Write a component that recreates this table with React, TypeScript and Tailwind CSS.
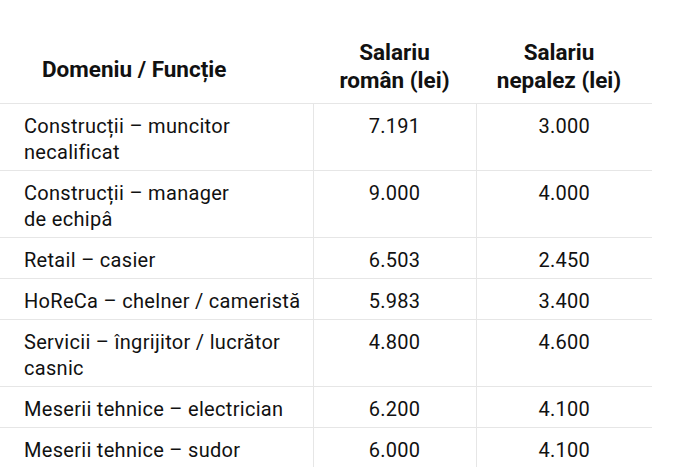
const rows = [
  { job: ["Construcții – muncitor", "necalificat"], ro: "7.191", np: "3.000" },
  { job: ["Construcții – manager", "de echipâ"], ro: "9.000", np: "4.000" },
  { job: ["Retail – casier"], ro: "6.503", np: "2.450" },
  { job: ["HoReCa – chelner / cameristă"], ro: "5.983", np: "3.400" },
  { job: ["Servicii – îngrijitor / lucrător", "casnic"], ro: "4.800", np: "4.600" },
  { job: ["Meserii tehnice – electrician"], ro: "6.200", np: "4.100" },
  { job: ["Meserii tehnice – sudor"], ro: "6.000", np: "4.100" },
];

export default function App() {
  return (
    <div className="min-h-screen bg-white text-[#111] font-['Roboto',sans-serif]">
      <table className="w-[652px] border-collapse table-fixed text-[20px] leading-[26px] tracking-[0.3px]">
        <colgroup>
          <col className="w-[313px]" />
          <col className="w-[163px]" />
          <col className="w-[176px]" />
        </colgroup>
        <thead>
          <tr className="h-[103px] border-b border-[#e6e6e6] text-[22.5px] leading-[28px] tracking-normal">
            <th className="font-bold text-left align-bottom pl-[42px] pb-[20px]">Domeniu / Funcție</th>
            <th className="font-bold align-bottom pb-[9px]">
              Salariu
              <br />
              român (lei)
            </th>
            <th className="font-bold align-bottom pb-[9px] pr-[10px]">
              Salariu
              <br />
              nepalez (lei)
            </th>
          </tr>
        </thead>
        <tbody>
          {rows.map((r) => (
            <tr key={r.job[0]} className="border-b border-[#e6e6e6]">
              <td className="align-top pl-6 pr-2 pt-[9px] pb-[5px] border-r border-[#e6e6e6]">
                {r.job.map((line, i) => (
                  <div key={i}>{line}</div>
                ))}
              </td>
              <td className="align-top text-center pt-[9px] pb-[5px] border-r border-[#e6e6e6]">{r.ro}</td>
              <td className="align-top text-center pt-[9px] pb-[5px]">{r.np}</td>
            </tr>
          ))}
        </tbody>
      </table>
    </div>
  );
}
